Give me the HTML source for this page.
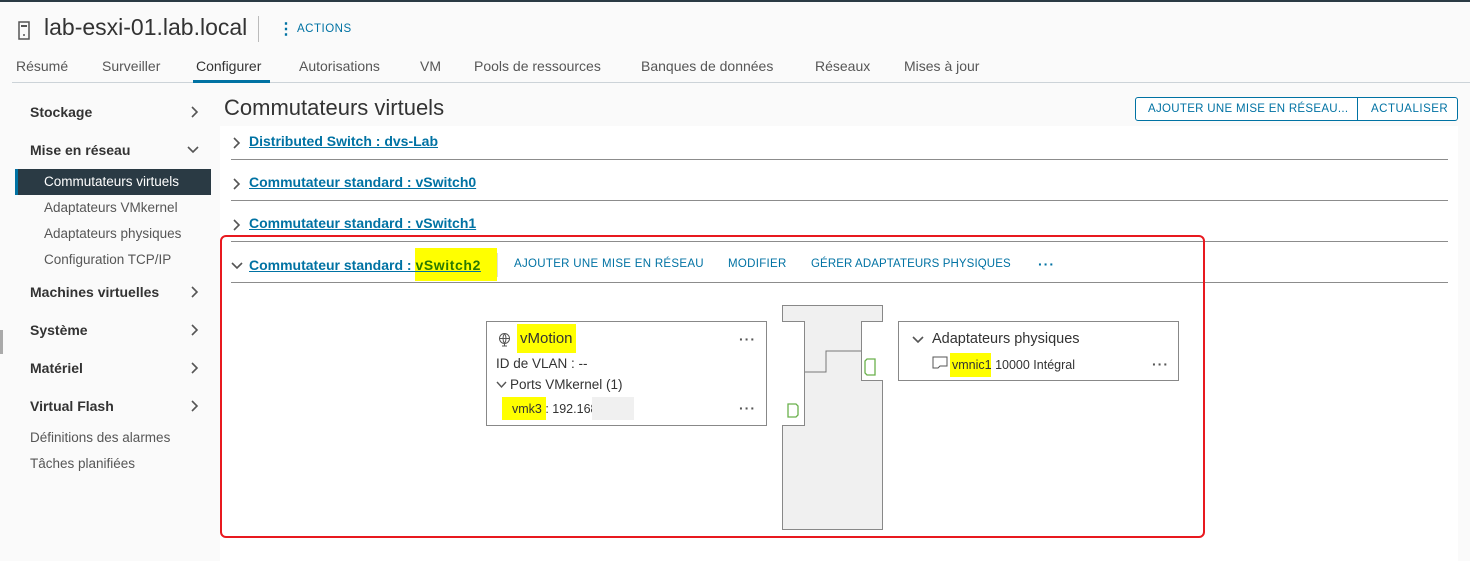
<!DOCTYPE html>
<html><head><meta charset="utf-8"><style>
*{margin:0;padding:0;box-sizing:border-box}
body{width:1470px;height:561px;overflow:hidden;background:#fafafa;font-family:"Liberation Sans",sans-serif;color:#333;position:relative}
.a{position:absolute;white-space:nowrap}
.link{color:#0072a3;text-decoration:underline;font-weight:bold;font-size:14px}
.hr{position:absolute;height:1px;background:#8c8c8c}
.side b{font-size:14px;color:#333}
.sub{font-size:13.5px;color:#565656}
.tab{font-size:14px;color:#565656;top:58px}
.act{font-size:11.5px;color:#0072a3;letter-spacing:.3px;top:258px}
.dots{font-weight:bold;color:#555;font-size:14px;letter-spacing:1px}
.hl{background:#ffff00}
</style></head><body>
<svg width="0" height="0" style="position:absolute"><defs>
<path id="r" d="M1 1l5 5-5 5" fill="none" stroke="#555" stroke-width="1.6"/>
<path id="d" d="M1 1l5 5 5-5" fill="none" stroke="#555" stroke-width="1.6"/>
</defs></svg>
<div class="a" style="left:0;top:0;width:1470px;height:2px;background:#2a3a44"></div>
<svg class="a" style="left:18px;top:21px" width="12" height="19"><rect x="1" y="1" width="10" height="17" fill="none" stroke="#555" stroke-width="1.5"/><rect x="3" y="4" width="6" height="2" fill="#555"/><circle cx="6" cy="14" r="1" fill="#555"/></svg>
<div class="a" style="left:44px;top:14px;font-size:23px;color:#333">lab-esxi-01.lab.local</div>
<div class="a" style="left:258px;top:16px;width:1px;height:26px;background:#bbb"></div>
<div class="a" style="left:278px;top:19px;font-size:16px;color:#0072a3;font-weight:bold">⋮</div>
<div class="a" style="left:297px;top:23px;font-size:11.5px;color:#0072a3;letter-spacing:.5px">ACTIONS</div>
<div class="a tab" style="left:16px">Résumé</div>
<div class="a tab" style="left:102px">Surveiller</div>
<div class="a tab" style="left:196px;color:#333">Configurer</div>
<div class="a tab" style="left:299px">Autorisations</div>
<div class="a tab" style="left:420px">VM</div>
<div class="a tab" style="left:474px">Pools de ressources</div>
<div class="a tab" style="left:641px">Banques de données</div>
<div class="a tab" style="left:815px">Réseaux</div>
<div class="a tab" style="left:904px">Mises à jour</div>
<div class="a" style="left:12px;top:82px;width:1458px;height:1px;background:#ccd3d8"></div>
<div class="a" style="left:193px;top:80px;width:77px;height:3px;background:#0072a3"></div>
<div class="side">
<b class="a" style="left:30px;top:104px">Stockage</b><svg class="a" style="left:191px;top:106px" width="8" height="12"><use href="#r"/></svg>
<b class="a" style="left:30px;top:142px">Mise en réseau</b><svg class="a" style="left:187px;top:146px" width="12" height="8"><use href="#d"/></svg>
<div class="a" style="left:15px;top:169px;width:196px;height:26px;background:#2a3a44;border-left:3px solid #0072a3"></div>
<div class="a sub" style="left:44px;top:174px;color:#fff">Commutateurs virtuels</div>
<div class="a sub" style="left:44px;top:200px">Adaptateurs VMkernel</div>
<div class="a sub" style="left:44px;top:226px">Adaptateurs physiques</div>
<div class="a sub" style="left:44px;top:252px">Configuration TCP/IP</div>
<b class="a" style="left:30px;top:284px">Machines virtuelles</b><svg class="a" style="left:191px;top:286px" width="8" height="12"><use href="#r"/></svg>
<b class="a" style="left:30px;top:322px">Système</b><svg class="a" style="left:191px;top:324px" width="8" height="12"><use href="#r"/></svg>
<b class="a" style="left:30px;top:360px">Matériel</b><svg class="a" style="left:191px;top:362px" width="8" height="12"><use href="#r"/></svg>
<b class="a" style="left:30px;top:398px">Virtual Flash</b><svg class="a" style="left:191px;top:400px" width="8" height="12"><use href="#r"/></svg>
<div class="a sub" style="left:30px;top:430px">Définitions des alarmes</div>
<div class="a sub" style="left:30px;top:456px">Tâches planifiées</div>
</div>
<div class="a" style="left:0;top:330px;width:3px;height:24px;background:#aaa"></div>
<div class="a" style="left:220px;top:126px;width:1238px;height:435px;background:#fff"></div>
<div class="a" style="left:224px;top:95px;font-size:22px;color:#333">Commutateurs virtuels</div>
<div class="a" style="left:1135px;top:97px;width:323px;height:24px;border:1px solid #0072a3;border-radius:3px;background:#fff"></div>
<div class="a" style="left:1357px;top:97px;width:1px;height:24px;background:#0072a3"></div>
<div class="a" style="left:1148px;top:103px;font-size:11.5px;color:#0072a3;letter-spacing:.3px">AJOUTER UNE MISE EN RÉSEAU...</div>
<div class="a" style="left:1371px;top:103px;font-size:11.5px;color:#0072a3;letter-spacing:.5px">ACTUALISER</div>
<svg class="a" style="left:233px;top:137px" width="8" height="12"><use href="#r"/></svg><div class="a link" style="left:249px;top:133px">Distributed Switch : dvs-Lab </div>
<div class="hr" style="left:231px;top:159px;width:1217px"></div>
<svg class="a" style="left:233px;top:178px" width="8" height="12"><use href="#r"/></svg><div class="a link" style="left:249px;top:174px">Commutateur standard : vSwitch0 </div>
<div class="hr" style="left:231px;top:200px;width:1217px"></div>
<svg class="a" style="left:233px;top:219px" width="8" height="12"><use href="#r"/></svg><div class="a link" style="left:249px;top:215px">Commutateur standard : vSwitch1 </div>
<div class="hr" style="left:231px;top:241px;width:1217px"></div>
<div class="a hl" style="left:415px;top:248px;width:82px;height:33px"></div>
<svg class="a" style="left:231px;top:262px" width="12" height="8"><use href="#d"/></svg><div class="a link" style="left:249px;top:257px">Commutateur standard : <span style="color:#2a7a00;letter-spacing:.6px">vSwitch2</span> </div>
<div class="a" style="left:497px;top:253px;width:1px;height:24px;background:#ddd"></div>
<div class="a act" style="left:514px">AJOUTER UNE MISE EN RÉSEAU</div>
<div class="a act" style="left:728px">MODIFIER</div>
<div class="a act" style="left:811px;letter-spacing:.1px">GÉRER ADAPTATEURS PHYSIQUES</div>
<div class="a dots" style="left:1038px;top:256px;color:#0072a3">···</div>
<div class="hr" style="left:231px;top:282px;width:1217px"></div>
<div class="a" style="left:486px;top:321px;width:281px;height:105px;border:1px solid #888;background:#fff"></div>
<svg class="a" style="left:497px;top:332px" width="15" height="15"><circle cx="7.5" cy="6.5" r="5" fill="none" stroke="#555"/><path d="M3 6.5h9M7.5 1.5c-2 3-2 7 0 10M7.5 1.5c2 3 2 7 0 10M5 14h5M7.5 11.5v2.5" fill="none" stroke="#555"/></svg>
<div class="a hl" style="left:517px;top:324px;width:59px;height:29px"></div>
<div class="a" style="left:520px;top:330px;font-size:15px;color:#333">vMotion</div>
<div class="a dots" style="left:739px;top:331px">···</div>
<div class="a" style="left:496px;top:356px;font-size:13.5px">ID de VLAN : --</div>
<div class="a" style="left:496px;top:377px;font-size:13.5px"><svg width="11" height="8" style="margin-right:3px"><path d="M1 1l4.5 5 4.5-5" fill="none" stroke="#555" stroke-width="1.4"/></svg>Ports VMkernel (1)</div>
<div class="a hl" style="left:502px;top:397px;width:44px;height:23px"></div>
<div class="a" style="left:512px;top:402px;font-size:12.5px">vmk3 : 192.168</div>
<div class="a" style="left:592px;top:397px;width:42px;height:23px;background:#f0f0f0"></div>
<div class="a dots" style="left:739px;top:400px">···</div>
<div class="a" style="left:782px;top:305px;width:101px;height:225px;border:1px solid #888;background:#f0f0f0"></div>
<div class="a" style="left:782px;top:321px;width:23px;height:105px;border:1px solid #888;border-left:none;background:#fff"></div>
<div class="a" style="left:861px;top:321px;width:22px;height:60px;border:1px solid #888;border-right:none;background:#fff"></div>
<svg class="a" style="left:782px;top:321px" width="101" height="105"><path d="M23 51H44V30H79" fill="none" stroke="#777"/><path d="M6 83h8l2 2v9l-2 2H6z" fill="none" stroke="#6ab04c" stroke-width="1.3"/><path d="M85 38h8v16h-8l-2-2V40z" fill="none" stroke="#6ab04c" stroke-width="1.3"/></svg>
<div class="a" style="left:898px;top:321px;width:281px;height:60px;border:1px solid #888;background:#fff"></div>
<svg class="a" style="left:912px;top:336px" width="12" height="8"><use href="#d"/></svg>
<div class="a" style="left:932px;top:331px;font-size:14.5px;color:#333">Adaptateurs physiques</div>
<svg class="a" style="left:932px;top:356px" width="17" height="13"><path d="M1 1h14v9H8l-2 2H1z" fill="none" stroke="#555"/></svg>
<div class="a hl" style="left:950px;top:353px;width:41px;height:24px"></div>
<div class="a" style="left:952px;top:358px;font-size:12.5px">vmnic1 10000 Intégral</div>
<div class="a dots" style="left:1152px;top:356px">···</div>
<div class="a" style="left:220px;top:235px;width:985px;height:303px;border:2px solid #e8191f;border-radius:6px"></div>
</body></html>
